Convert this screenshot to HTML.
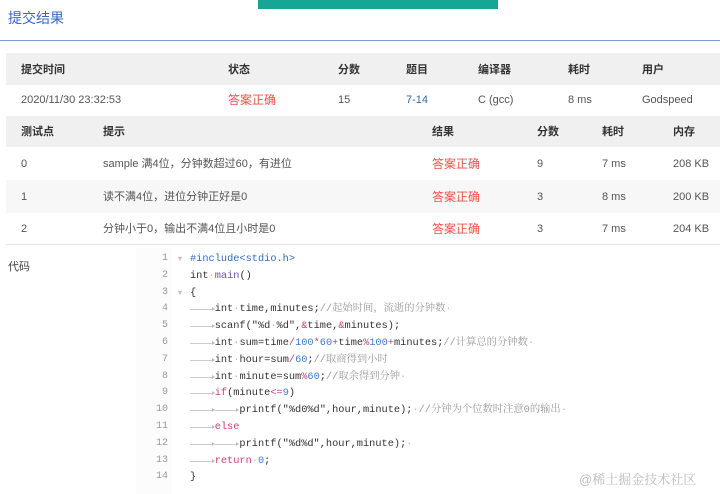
<!DOCTYPE html>
<html><head><meta charset="utf-8">
<style>
*{margin:0;padding:0;box-sizing:border-box}
body{width:720px;height:494px;overflow:hidden;background:#fff;position:relative;font-family:"Liberation Sans","Noto Sans CJK SC",sans-serif;font-size:11px;color:#555}
.a{position:absolute;white-space:nowrap;line-height:14px;height:14px}
.row{position:absolute;left:6px;width:714px}
.h{background:#f0f0f0}
.b{font-weight:bold;color:#333}
.g{background:#f7f7f7}
.red{color:#f0504a;font-size:12px}
.code{font-family:"Liberation Mono","Noto Sans CJK SC",monospace;font-size:10.3px;color:#333}
.ln{position:absolute;left:150px;width:18px;text-align:right;font-family:"Liberation Mono",monospace;font-size:10px;color:#999;line-height:14px}
.t{display:inline-block;width:4ch;height:14px;vertical-align:top;background:linear-gradient(#ccc,#ccc) no-repeat 0 7px/calc(100% - 2px) 1px;position:relative}
.t:after{content:"";position:absolute;right:0;top:5px;border-left:3px solid #bbb;border-top:2.5px solid transparent;border-bottom:2.5px solid transparent}
.d{color:#bbb}
.k{color:#d04070}.n{color:#3a7bd5}.o{color:#c0407a}.f{color:#7050b0}.p{color:#2f6fb0}
.c{color:#999;font-family:"Liberation Mono","Noto Serif CJK SC",serif}
</style></head><body>
<div class="a" style="left:258px;top:0;width:240px;height:9px;background:#17a595"></div>
<div class="a" style="left:8px;top:10px;font-size:14px;color:#3a68c0;line-height:16px;height:16px">提交结果</div>
<div class="a" style="left:0;top:40px;width:720px;height:1px;background:#7a9ad0"></div>

<div class="row h" style="top:53px;height:32px"></div>
<div class="row" style="top:85px;height:31px"></div>
<div class="row h" style="top:116px;height:31px"></div>
<div class="row" style="top:147px;height:33px"></div>
<div class="row g" style="top:180px;height:33px"></div>
<div class="row" style="top:213px;height:32px;border-bottom:1px solid #e6e6e6"></div>

<div class="a b" style="top:63px;left:21px">提交时间</div>
<div class="a b" style="top:63px;left:228px">状态</div>
<div class="a b" style="top:63px;left:338px">分数</div>
<div class="a b" style="top:63px;left:406px">题目</div>
<div class="a b" style="top:63px;left:478px">编译器</div>
<div class="a b" style="top:63px;left:568px">耗时</div>
<div class="a b" style="top:63px;left:642px">用户</div>

<div class="a" style="top:93px;left:21px">2020/11/30 23:32:53</div>
<div class="a red" style="top:93px;left:228px">答案正确</div>
<div class="a" style="top:93px;left:338px">15</div>
<div class="a" style="top:93px;left:406px;color:#3a68a0">7-14</div>
<div class="a" style="top:93px;left:478px">C (gcc)</div>
<div class="a" style="top:93px;left:568px">8 ms</div>
<div class="a" style="top:93px;left:642px">Godspeed</div>

<div class="a b" style="top:125px;left:21px">测试点</div>
<div class="a b" style="top:125px;left:103px">提示</div>
<div class="a b" style="top:125px;left:432px">结果</div>
<div class="a b" style="top:125px;left:537px">分数</div>
<div class="a b" style="top:125px;left:602px">耗时</div>
<div class="a b" style="top:125px;left:673px">内存</div>

<div class="a" style="top:157px;left:21px">0</div>
<div class="a" style="top:157px;left:103px">sample 满4位，分钟数超过60，有进位</div>
<div class="a red" style="top:157px;left:432px">答案正确</div>
<div class="a" style="top:157px;left:537px">9</div>
<div class="a" style="top:157px;left:602px">7 ms</div>
<div class="a" style="top:157px;left:673px">208 KB</div>

<div class="a" style="top:190px;left:21px">1</div>
<div class="a" style="top:190px;left:103px">读不满4位，进位分钟正好是0</div>
<div class="a red" style="top:190px;left:432px">答案正确</div>
<div class="a" style="top:190px;left:537px">3</div>
<div class="a" style="top:190px;left:602px">8 ms</div>
<div class="a" style="top:190px;left:673px">200 KB</div>

<div class="a" style="top:222px;left:21px">2</div>
<div class="a" style="top:222px;left:103px">分钟小于0，输出不满4位且小时是0</div>
<div class="a red" style="top:222px;left:432px">答案正确</div>
<div class="a" style="top:222px;left:537px">3</div>
<div class="a" style="top:222px;left:602px">7 ms</div>
<div class="a" style="top:222px;left:673px">204 KB</div>

<div class="a" style="top:260px;left:8px;color:#444">代码</div>
<div class="a" style="left:136px;top:248px;width:36px;height:246px;background:#fcfcfc"></div>

<div class="ln" style="top:252px">1</div>
<div class="ln" style="top:269px">2</div>
<div class="ln" style="top:286px">3</div>
<div class="ln" style="top:302px">4</div>
<div class="ln" style="top:319px">5</div>
<div class="ln" style="top:336px">6</div>
<div class="ln" style="top:353px">7</div>
<div class="ln" style="top:370px">8</div>
<div class="ln" style="top:386px">9</div>
<div class="ln" style="top:403px">10</div>
<div class="ln" style="top:420px">11</div>
<div class="ln" style="top:437px">12</div>
<div class="ln" style="top:454px">13</div>
<div class="ln" style="top:470px">14</div>
<div class="a" style="left:178px;top:252px;font-size:8px;color:#bbb">▾</div>
<div class="a" style="left:178px;top:286px;font-size:8px;color:#bbb">▾</div>

<div class="a code" style="left:190px;top:252px"><span class="p">#include&lt;stdio.h&gt;</span></div>
<div class="a code" style="left:190px;top:269px">int<span class="d">·</span><span class="f">main</span>()</div>
<div class="a code" style="left:190px;top:286px">{</div>
<div class="a code" style="left:190px;top:302px"><span class="t"></span>int<span class="d">·</span>time,minutes;<span class="c">//起始时间，流逝的分钟数</span><span class="d">·</span></div>
<div class="a code" style="left:190px;top:319px"><span class="t"></span>scanf("%d<span class="d">·</span>%d",<span class="o">&amp;</span>time,<span class="o">&amp;</span>minutes);</div>
<div class="a code" style="left:190px;top:336px"><span class="t"></span>int<span class="d">·</span>sum=time<span class="o">/</span><span class="n">100</span><span class="o">*</span><span class="n">60</span><span class="o">+</span>time<span class="o">%</span><span class="n">100</span><span class="o">+</span>minutes;<span class="c">//计算总的分钟数</span><span class="d">·</span></div>
<div class="a code" style="left:190px;top:353px"><span class="t"></span>int<span class="d">·</span>hour=sum<span class="o">/</span><span class="n">60</span>;<span class="c">//取商得到小时</span></div>
<div class="a code" style="left:190px;top:370px"><span class="t"></span>int<span class="d">·</span>minute=sum<span class="o">%</span><span class="n">60</span>;<span class="c">//取余得到分钟</span><span class="d">·</span></div>
<div class="a code" style="left:190px;top:386px"><span class="t"></span><span class="k">if</span>(minute<span class="o">&lt;=</span><span class="n">9</span>)</div>
<div class="a code" style="left:190px;top:403px"><span class="t"></span><span class="t"></span>printf("%d0%d",hour,minute);<span class="d">·</span><span class="c">//分钟为个位数时注意0的输出</span><span class="d">·</span></div>
<div class="a code" style="left:190px;top:420px"><span class="t"></span><span class="k">else</span></div>
<div class="a code" style="left:190px;top:437px"><span class="t"></span><span class="t"></span>printf("%d%d",hour,minute);<span class="d">·</span></div>
<div class="a code" style="left:190px;top:454px"><span class="t"></span><span class="k">return</span><span class="d">·</span><span class="n">0</span>;</div>
<div class="a code" style="left:190px;top:470px">}</div>

<div class="a" style="left:579px;top:472px;font-size:13px;line-height:16px;height:16px;color:#bbb;font-family:'Liberation Sans','Noto Serif CJK SC',serif">@稀土掘金技术社区</div>
</body></html>
